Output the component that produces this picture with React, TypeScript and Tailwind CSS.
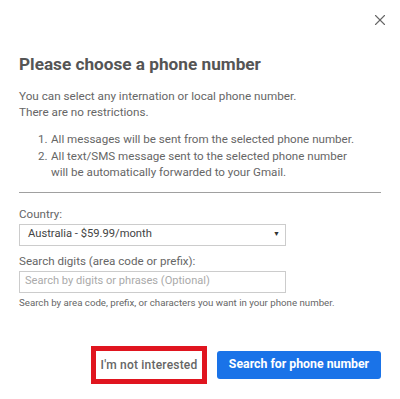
import { X } from "lucide-react";

export default function App() {
  return (
    <div className="w-[400px] h-[399px] bg-white overflow-hidden font-['Roboto','Liberation_Sans',sans-serif] text-[#5f6368]">
      {/* Close */}
      <div className="flex justify-end pt-[11px] pr-[11px] h-[52px]">
        <X size={18} strokeWidth={1.5} className="text-[#666]" />
      </div>

      <div className="px-[19px]">
        {/* Title */}
        <h1 className="text-[17.2px] leading-[24px] font-bold text-[#555]">
          Please choose a phone number
        </h1>

        {/* Intro */}
        <p className="mt-[12px] text-[11.7px] leading-[16px] text-[#666]">
          You can select any internation or local phone number.
          <br />
          There are no restrictions.
        </p>

        {/* Notes */}
        <ol className="mt-[11px] text-[11.6px] leading-[16.5px] text-[#666] pl-[19px]">
          <li className="flex">
            <span className="w-[13px] shrink-0">1.</span>
            <span>All messages will be sent from the selected phone number.</span>
          </li>
          <li className="flex">
            <span className="w-[13px] shrink-0">2.</span>
            <span className="w-[300px]">
              All text/SMS message sent to the selected phone number will be automatically forwarded to your Gmail.
            </span>
          </li>
        </ol>

        <div className="mt-[11px] h-px bg-[#a0a0a0]" />

        {/* Country */}
        <div className="mt-[13px] text-[11.6px] leading-[16px] text-[#666]">Country:</div>
        <div className="mt-[2px] w-[267px] h-[22px] border border-[#ccc] flex items-center justify-between pl-[8px] pr-[5px] text-[11.2px] text-[#444]">
          <span>Australia - $59.99/month</span>
          <span className="text-[7px] text-[#333]">▼</span>
        </div>

        {/* Search */}
        <div className="mt-[7px] text-[11.6px] leading-[16px] text-[#666]">
          Search digits (area code or prefix):
        </div>
        <div className="mt-[2px] w-[267px] h-[22px] border border-[#ccc] flex items-center pl-[5px] text-[11.1px] text-[#aaa]">
          Search by digits or phrases (Optional)
        </div>
        <div className="mt-[3px] text-[9.7px] leading-[14px] text-[#666]">
          Search by area code, prefix, or characters you want in your phone number.
        </div>

        {/* Actions */}
        <div className="mt-[36px] flex justify-end items-center gap-[10px]">
          <div className="border-[5px] border-[#e0151f] h-[38px] w-[116px] flex items-center justify-center">
            <span className="text-[12px] font-medium text-[#666] tracking-[0.2px]">I'm not interested</span>
          </div>
          <button className="h-[28px] w-[164px] rounded-[3px] bg-[#1a73e8] text-white text-[12.3px] font-bold">
            Search for phone number
          </button>
        </div>
      </div>
    </div>
  );
}
